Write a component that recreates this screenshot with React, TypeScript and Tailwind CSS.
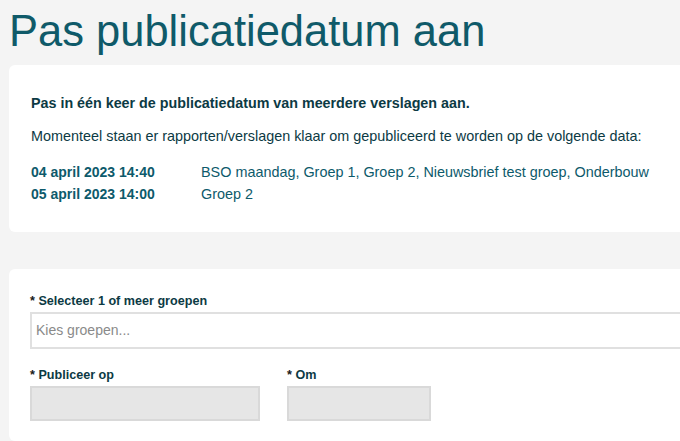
const groups = [
  { date: "04 april 2023 14:40", names: "BSO maandag, Groep 1, Groep 2, Nieuwsbrief test groep, Onderbouw" },
  { date: "05 april 2023 14:00", names: "Groep 2" },
];

const Label = ({ children }: { children: React.ReactNode }) => (
  <label className="block text-[12.6px] font-bold leading-4 text-[#0c3a44]">
    <span className="text-[#1a1a1a]">*</span> {children}
  </label>
);

export default function App() {
  return (
    <div
      className="min-h-[441px] w-full overflow-hidden bg-[#f4f4f4]"
      style={{ fontFamily: '"Liberation Sans", Arial, sans-serif' }}
    >
      <h1 className="pl-[9px] pt-[6px] text-[43.5px] leading-[50px] font-normal text-[#0f5a69]">
        Pas publicatiedatum aan
      </h1>

      <section className="ml-[9px] mt-[9px] w-[720px] rounded-l-md bg-white px-[22px] pt-[30px] pb-[30px]">
        <p className="text-[14.3px] font-bold leading-4 text-[#0c3a44]">
          Pas in één keer de publicatiedatum van meerdere verslagen aan.
        </p>
        <p className="mt-[17px] text-[14.4px] leading-4 text-[#0c3a44]">
          Momenteel staan er rapporten/verslagen klaar om gepubliceerd te worden op de volgende data:
        </p>
        <div className="mt-[20px] flex flex-col gap-[6px]">
          {groups.map((g) => (
            <div key={g.date} className="flex leading-4 text-[#0d5a6b]">
              <span className="w-[170px] text-[14px] font-bold">{g.date}</span>
              <span className="text-[14.4px]">{g.names}</span>
            </div>
          ))}
        </div>
      </section>

      <section className="ml-[9px] mt-[37px] w-[720px] rounded-l-md bg-white px-[21px] pt-[24px] pb-[20px]">
        <Label>Selecteer 1 of meer groepen</Label>
        <div className="mt-[3px] flex h-[37px] items-center border-2 border-[#e0e0e0] px-[4px] text-[14px] text-[#8a8a8a]">
          Kies groepen...
        </div>

        <div className="mt-[18px] flex gap-[27px]">
          <div>
            <Label>Publiceer op</Label>
            <div className="mt-[3px] h-[35px] w-[230px] border-2 border-[#d9d9d9] bg-[#e6e6e6]" />
          </div>
          <div>
            <Label>Om</Label>
            <div className="mt-[3px] h-[35px] w-[144px] border-2 border-[#d9d9d9] bg-[#e6e6e6]" />
          </div>
        </div>
      </section>
    </div>
  );
}
